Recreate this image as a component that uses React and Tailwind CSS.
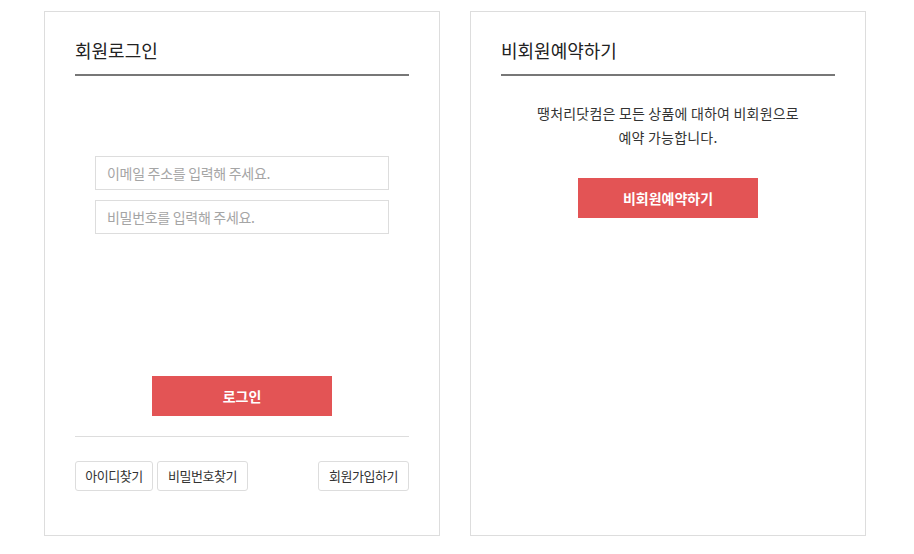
import React from 'react';

const font = { fontFamily: '"Noto Sans CJK KR", "Noto Sans", sans-serif' };

function CardHeader({ title }) {
  return (
    <div className="border-b-2 border-[#777] pb-[10px]">
      <h2 className="text-[18px] leading-[27px] text-[#222] font-normal">{title}</h2>
    </div>
  );
}

function LoginCard() {
  return (
    <div className="w-[396px] h-[525px] border border-[#ddd] bg-white px-[30px] pt-[25px] flex flex-col">
      <CardHeader title="회원로그인" />

      <div className="mt-[80px] px-[20px] flex flex-col gap-[10px]">
        <input
          type="text"
          placeholder="이메일 주소를 입력해 주세요."
          className="h-[34px] w-full border border-[#ddd] pl-[11px] text-[14px] tracking-[-0.3px] text-[#333] placeholder:text-[#a5a5a5] outline-none"
        />
        <input
          type="password"
          placeholder="비밀번호를 입력해 주세요."
          className="h-[34px] w-full border border-[#ddd] pl-[11px] text-[14px] tracking-[-0.3px] text-[#333] placeholder:text-[#a5a5a5] outline-none"
        />
      </div>

      <div className="mt-[142px] flex justify-center">
        <button className="w-[180px] h-[40px] bg-[#e35455] text-white text-[14px] font-bold">
          로그인
        </button>
      </div>

      <div className="mt-[20px] border-t border-[#ddd]" />

      <div className="mt-[24px] flex items-center">
        <button className="w-[78px] h-[30px] border border-[#ddd] rounded-[3px] text-[13px] text-[#333] tracking-[-0.5px]">
          아이디찾기
        </button>
        <button className="ml-[4px] w-[91px] h-[30px] border border-[#ddd] rounded-[3px] text-[13px] text-[#333] tracking-[-0.5px]">
          비밀번호찾기
        </button>
        <button className="ml-auto w-[91px] h-[30px] border border-[#ddd] rounded-[3px] text-[13px] text-[#333] tracking-[-0.5px]">
          회원가입하기
        </button>
      </div>
    </div>
  );
}

function GuestCard() {
  return (
    <div className="w-[396px] h-[525px] border border-[#ddd] bg-white px-[30px] pt-[25px] flex flex-col">
      <CardHeader title="비회원예약하기" />

      <p className="mt-[25px] text-center text-[14px] leading-[24px] text-[#333] tracking-[0.2px]">
        땡처리닷컴은 모든 상품에 대하여 비회원으로
        <br />
        예약 가능합니다.
      </p>

      <div className="mt-[29px] flex justify-center">
        <button className="w-[180px] h-[40px] bg-[#e35455] text-white text-[14px] font-bold">
          비회원예약하기
        </button>
      </div>
    </div>
  );
}

export default function App() {
  return (
    <div className="min-h-[554px] bg-white" style={font}>
      <div className="pt-[11px] pl-[44px] flex gap-[30px]">
        <LoginCard />
        <GuestCard />
      </div>
    </div>
  );
}
